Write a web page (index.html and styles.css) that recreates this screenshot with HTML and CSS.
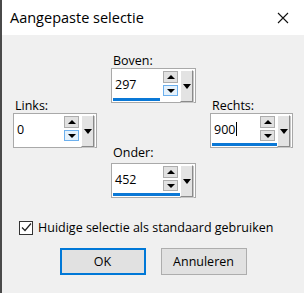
FILE: index.html
```html
<!DOCTYPE html>
<html lang="nl">
<head>
    <meta charset="UTF-8">
    <title>Aangepaste selectie</title>
    <link rel="stylesheet" href="styles.css">
</head>
<body>
    <div class="window">
        <div class="titlebar">
            <div class="title">Aangepaste selectie</div>
            <div class="close-btn">
                <svg width="12" height="12" viewBox="0 0 12 12"><path d="M1 1L11 11M11 1L1 11" stroke="#111" stroke-width="1.1"/></svg>
            </div>
        </div>

        <div class="content">
            <div class="fields">
                <div class="field field-top">
                    <div class="field-label">Boven:</div>
                    <div class="field-box">
                        <div class="value-row">
                            <div class="value">297</div>
                            <div class="spin">
                                <div class="spin-btn"><span class="tri-up"></span></div>
                                <div class="spin-btn active"><span class="tri-down"></span></div>
                            </div>
                            <div class="drop-btn"><span class="tri-drop"></span></div>
                        </div>
                        <div class="value-bar"><div class="bar-fill" style="width: 58%"></div></div>
                    </div>
                </div>

                <div class="field field-left">
                    <div class="field-label">Links:</div>
                    <div class="field-box">
                        <div class="value-row">
                            <div class="value">0</div>
                            <div class="spin">
                                <div class="spin-btn"><span class="tri-up"></span></div>
                                <div class="spin-btn active"><span class="tri-down"></span></div>
                            </div>
                            <div class="drop-btn"><span class="tri-drop"></span></div>
                        </div>
                        <div class="value-bar"><div class="bar-fill" style="width: 0%"></div></div>
                    </div>
                </div>

                <div class="field field-right">
                    <div class="field-label">Rechts:</div>
                    <div class="field-box">
                        <div class="value-row">
                            <div class="value">900<span class="caret"></span></div>
                            <div class="spin">
                                <div class="spin-btn"><span class="tri-up"></span></div>
                                <div class="spin-btn"><span class="tri-down"></span></div>
                            </div>
                            <div class="drop-btn"><span class="tri-drop"></span></div>
                        </div>
                        <div class="value-bar"><div class="bar-fill" style="width: 100%"></div></div>
                    </div>
                </div>

                <div class="field field-bottom">
                    <div class="field-label">Onder:</div>
                    <div class="field-box">
                        <div class="value-row">
                            <div class="value">452</div>
                            <div class="spin">
                                <div class="spin-btn"><span class="tri-up"></span></div>
                                <div class="spin-btn"><span class="tri-down"></span></div>
                            </div>
                            <div class="drop-btn"><span class="tri-drop"></span></div>
                        </div>
                        <div class="value-bar"><div class="bar-fill" style="width: 92%"></div></div>
                    </div>
                </div>
            </div>

            <label class="check-row">
                <span class="checkbox">
                    <svg width="11" height="11" viewBox="0 0 11 11"><path d="M1 5.5L4 8.5L10 1.5" fill="none" stroke="#222" stroke-width="1.2"/></svg>
                </span>
                <span class="check-label">Huidige selectie als standaard gebruiken</span>
            </label>

            <div class="buttons">
                <div class="btn btn-default">OK</div>
                <div class="btn">Annuleren</div>
            </div>
        </div>
    </div>
</body>
</html>
```

FILE: styles.css
```css
* {
    margin: 0;
    padding: 0;
    box-sizing: border-box;
}

body {
    width: 304px;
    height: 293px;
    overflow: hidden;
    background-color: #f0f0f0;
    font-family: 'Open Sans', 'Noto Sans', sans-serif;
    font-size: 12.5px;
    color: #000;
}

.window {
    height: 293px;
    border-left: 2px solid #4a4a4a;
    background-color: #f0f0f0;
}

.titlebar {
    height: 35px;
    background: #ffffff;
    display: flex;
    align-items: center;
    justify-content: space-between;
    padding-left: 8px;
}

.title {
    font-size: 14.5px;
    margin-top: -1px;
}

.close-btn {
    width: 46px;
    height: 35px;
    display: flex;
    align-items: center;
    justify-content: center;
    margin-right: -2px;
}

.content {
    padding-top: 18px;
}

/* spin fields */
.fields {
    display: grid;
    grid-template-columns: 84px 85px 83px;
    grid-template-rows: 45px 5px 42px 3px 50px;
    column-gap: 14px;
    padding-left: 11px;
    height: 145px;
}

.field-top { grid-column: 2; grid-row: 1 / 3; }
.field-left { grid-column: 1; grid-row: 2 / 5; }
.field-right { grid-column: 3; grid-row: 2 / 5; }
.field-bottom { grid-column: 2; grid-row: 4 / 6; }

.field-label {
    line-height: 15px;
    height: 15px;
    padding-left: 2px;
}

.field-bottom .field-label {
    margin-bottom: 3px;
}

.field-box {
    height: 35px;
    background: #fff;
    border: 1px solid #a9a9a9;
    display: flex;
    flex-direction: column;
}

.value-row {
    display: flex;
    height: 29px;
    padding-top: 1px;
}

.value {
    flex: 1;
    padding-left: 3px;
    line-height: 15px;
    padding-top: 7px;
    display: flex;
    align-items: flex-start;
}

.caret {
    display: inline-block;
    width: 1px;
    height: 14px;
    background: #000;
    margin-left: 1px;
}

.spin {
    width: 15px;
    display: flex;
    flex-direction: column;
    gap: 2px;
    padding-top: 1px;
    margin-right: 2px;
}

.spin-btn {
    height: 12px;
    background: #e1e1e1;
    border: 1px solid #adadad;
    display: flex;
    align-items: center;
    justify-content: center;
}

.spin-btn + .spin-btn {
    height: 11px;
}

.spin-btn.active {
    background: #e5f1fb;
    border-color: #6cb0ee;
}

.tri-up {
    width: 0;
    height: 0;
    border-left: 4px solid transparent;
    border-right: 4px solid transparent;
    border-bottom: 4px solid #000;
}

.tri-down {
    width: 0;
    height: 0;
    border-left: 4px solid transparent;
    border-right: 4px solid transparent;
    border-top: 4px solid #000;
}

.drop-btn {
    width: 13px;
    height: 32px;
    margin-right: 2px;
    background: #e3e3e3;
    border-top: 1px solid #fff;
    border-left: 1px solid #fff;
    border-right: 1px solid #8a8a8a;
    border-bottom: 1px solid #8a8a8a;
    box-shadow: 1px 1px 0 #c8c8c8;
    display: flex;
    align-items: center;
    justify-content: center;
    position: relative;
    z-index: 1;
}

.tri-drop {
    width: 0;
    height: 0;
    border-left: 4px solid transparent;
    border-right: 4px solid transparent;
    border-top: 5px solid #000;
}

.value-bar {
    height: 3px;
    margin: 0 1px;
}

.bar-fill {
    height: 3px;
    background: #0a78d6;
}

/* checkbox */
.check-row {
    display: flex;
    align-items: center;
    gap: 5px;
    margin-top: 22px;
    padding-left: 17px;
    height: 15px;
}

.checkbox {
    width: 14px;
    height: 14px;
    border: 1px solid #333;
    background: #fff;
    display: flex;
    align-items: center;
    justify-content: center;
}

.check-label {
    line-height: 15px;
}

/* buttons */
.buttons {
    display: flex;
    justify-content: center;
    gap: 15px;
    margin-top: 13px;
}

.btn {
    width: 86px;
    height: 27px;
    background: #e1e1e1;
    border: 1px solid #adadad;
    display: flex;
    align-items: center;
    justify-content: center;
}

.btn-default {
    border: 2px solid #0078d7;
}
```
